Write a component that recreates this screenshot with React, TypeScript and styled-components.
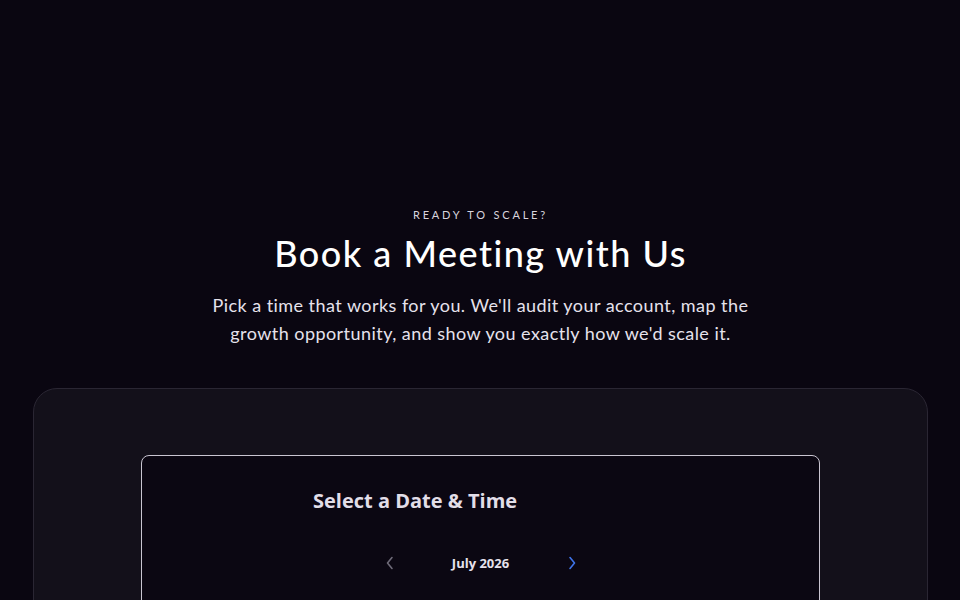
import * as React from 'react'
import styled, { createGlobalStyle } from 'styled-components'

const Global = createGlobalStyle`
  html, body {
    margin: 0;
    padding: 0;
    background: #0a0611;
    height: 100%;
    overflow: hidden;
  }
  * { box-sizing: border-box; }
`

const Page = styled.main`
  min-height: 600px;
  background: #0a0611;
  padding: 206px 32px 0 33px;
  font-family: Lato, 'Noto Sans', sans-serif;
  color: #ffffff;
`

const Intro = styled.header`
  display: flex;
  flex-direction: column;
  align-items: center;
  text-align: center;
`

const Eyebrow = styled.p`
  margin: 0;
  font-size: 11px;
  line-height: 18px;
  letter-spacing: 2.8px;
  color: #d8d4de;
`

const Title = styled.h1`
  margin: 7px 0 0;
  font-size: 36px;
  line-height: 44px;
  font-weight: 500;
  letter-spacing: 1.5px;
  color: #ffffff;
`

const Lead = styled.p`
  margin: 16px 0 0;
  max-width: 600px;
  font-size: 18px;
  line-height: 28px;
  letter-spacing: 0.45px;
  color: #e6e2ec;
`

const Shell = styled.section`
  margin-top: 41px;
  height: 400px;
  border: 1px solid #2a2633;
  border-radius: 24px;
  background: #13101a;
  padding: 66px 107px 0 107px;
`

const Widget = styled.div`
  height: 400px;
  border: 1px solid #c9c5d1;
  border-radius: 8px;
  background: #0b0712;
  padding: 30px 0 0 0;
`

const WidgetTitle = styled.h2`
  margin: 0 0 0 171px;
  font-family: 'Open Sans', Lato, sans-serif;
  font-size: 20px;
  line-height: 30px;
  font-weight: 700;
  color: #e2dee8;
`

const MonthNav = styled.div`
  margin-top: 37px;
  display: flex;
  align-items: center;
  justify-content: center;
  gap: 41px;
`

const Month = styled.span`
  width: 80px;
  text-align: center;
  font-family: 'Open Sans', Lato, sans-serif;
  font-size: 13px;
  font-weight: 700;
  color: #e6e2ec;
`

const Arrow = styled.button<{ $active?: boolean }>`
  width: 20px;
  height: 20px;
  padding: 0;
  border: 0;
  background: none;
  display: flex;
  align-items: center;
  justify-content: center;
  color: ${(p) => (p.$active ? '#3f74ea' : '#6f6b79')};
`

const Chevron = ({ dir }: { dir: 'left' | 'right' }) => (
  <svg width="10" height="14" viewBox="0 0 10 14" fill="none">
    <path
      d={dir === 'left' ? 'M7 1.5L2.5 7L7 12.5' : 'M3 1.5L7.5 7L3 12.5'}
      stroke="currentColor"
      strokeWidth="1.6"
      strokeLinecap="round"
      strokeLinejoin="round"
    />
  </svg>
)

export default function App() {
  return (
    <>
      <Global />
      <Page>
        <Intro>
          <Eyebrow>READY TO SCALE?</Eyebrow>
          <Title>Book a Meeting with Us</Title>
          <Lead>
            Pick a time that works for you. We'll audit your account, map the
            <br />
            growth opportunity, and show you exactly how we'd scale it.
          </Lead>
        </Intro>
        <Shell>
          <Widget>
            <WidgetTitle>Select a Date &amp; Time</WidgetTitle>
            <MonthNav>
              <Arrow aria-label="Previous month">
                <Chevron dir="left" />
              </Arrow>
              <Month>July 2026</Month>
              <Arrow $active aria-label="Next month">
                <Chevron dir="right" />
              </Arrow>
            </MonthNav>
          </Widget>
        </Shell>
      </Page>
    </>
  )
}
